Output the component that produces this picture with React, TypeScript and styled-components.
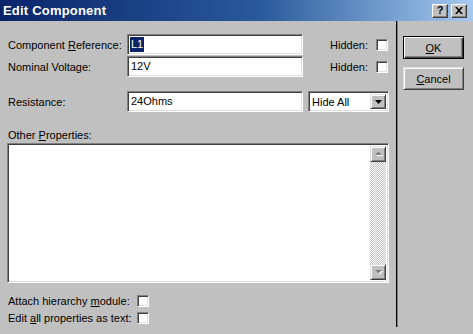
import styled, { createGlobalStyle, css } from "styled-components";

const GlobalStyle = createGlobalStyle`
  html, body {
    margin: 0;
    padding: 0;
    background: #c0c0c0;
    overflow: hidden;
  }
  body {
    font-family: "Liberation Sans", Arial, sans-serif;
    font-size: 11px;
    color: #000;
  }
`;

export default function App() {
  return (
    <Window>
      <GlobalStyle />
      <TitleBar>
        <Title>Edit Component</Title>
        <CaptionButtons>
          <CaptionButton>?</CaptionButton>
          <CaptionButton>
            <svg width="8" height="7" viewBox="0 0 8 7">
              <path d="M0 0h2l2 2.3L6 0h2L5 3.5 8 7H6L4 4.7 2 7H0l3-3.5z" fill="#000" />
            </svg>
          </CaptionButton>
        </CaptionButtons>
      </TitleBar>
      <Body>
        <Main>
          <FieldRow>
            <Label>
              Component <u>R</u>eference:
            </Label>
            <Input>
              <Value $selected>L1</Value>
            </Input>
            <HiddenGroup>
              Hidden:
              <CheckBox />
            </HiddenGroup>
          </FieldRow>
          <FieldRow $space={1}>
            <Label>Nominal Voltage:</Label>
            <Input>
              <Value>12V</Value>
            </Input>
            <HiddenGroup>
              Hidden:
              <CheckBox />
            </HiddenGroup>
          </FieldRow>
          <FieldRow $space={14}>
            <Label>Resistance:</Label>
            <Input>
              <Value>24Ohms</Value>
            </Input>
            <Combo>
              <ComboText>Hide All</ComboText>
              <ArrowButton>
                <svg width="7" height="4" viewBox="0 0 7 4">
                  <path d="M0 0h7L3.5 4z" fill="#000" />
                </svg>
              </ArrowButton>
            </Combo>
          </FieldRow>
          <SectionLabel>
            Other <u>P</u>roperties:
          </SectionLabel>
          <TextArea>
            <TextSpace />
            <ScrollBar>
              <ScrollButton>
                <svg width="9" height="6" viewBox="0 0 9 6">
                  <path d="M2 5h7L5.5 1.5z" fill="#fff" />
                  <path d="M1 4h7L4.5 0.5z" fill="#808080" />
                </svg>
              </ScrollButton>
              <Track />
              <ScrollButton>
                <svg width="9" height="6" viewBox="0 0 9 6">
                  <path d="M2 2h7L5.5 5.5z" fill="#fff" />
                  <path d="M1 1h7L4.5 4.5z" fill="#808080" />
                </svg>
              </ScrollButton>
            </ScrollBar>
          </TextArea>
          <CheckRow $space={9}>
            <Label>
              Attach hierarchy <u>m</u>odule:
            </Label>
            <CheckBox />
          </CheckRow>
          <CheckRow>
            <Label>
              Edit <u>a</u>ll properties as text:
            </Label>
            <CheckBox />
          </CheckRow>
        </Main>
        <Divider />
        <Side>
          <Button $default>
            <u>O</u>K
          </Button>
          <Button>
            <u>C</u>ancel
          </Button>
        </Side>
      </Body>
    </Window>
  );
}

const Window = styled.div`
  width: 473px;
  height: 334px;
  display: flex;
  flex-direction: column;
  background: #c0c0c0;
`;

const TitleBar = styled.div`
  height: 21px;
  flex: none;
  display: flex;
  align-items: center;
  justify-content: space-between;
  padding: 0 6px 0 3px;
  background: linear-gradient(to right, #0a246a 0%, #2a5a9c 55%, #a6caf0 100%);
`;

const Title = styled.div`
  color: #fff;
  font-weight: bold;
  font-size: 13px;
  letter-spacing: 0.2px;
`;

const CaptionButtons = styled.div`
  display: flex;
  gap: 3px;
`;

const CaptionButton = styled.div`
  width: 16px;
  height: 14px;
  box-sizing: border-box;
  display: flex;
  align-items: center;
  justify-content: center;
  background: #c0c0c0;
  border: 1px solid;
  border-color: #fff #404040 #404040 #fff;
  box-shadow: inset -1px -1px #808080;
  font-weight: bold;
  font-size: 11px;
  line-height: 1;
`;

const Body = styled.div`
  flex: 1;
  display: flex;
  padding: 0 0 7px 7px;
`;

const Main = styled.div`
  width: 382px;
  display: flex;
  flex-direction: column;
  padding-top: 13px;
`;

const FieldRow = styled.div<{ $space?: number }>`
  display: grid;
  grid-template-columns: 120px 176px 1fr;
  align-items: center;
  height: 21px;
  margin-top: ${(p) => p.$space ?? 0}px;
`;

const Label = styled.div`
  white-space: nowrap;
  padding-left: 1px;
`;

const sunken = css`
  box-sizing: border-box;
  border: 1px solid;
  border-color: #808080 #fff #fff #808080;
  box-shadow: inset 1px 1px #404040, inset -1px -1px #dfdfdf;
`;

const Input = styled.div`
  ${sunken};
  height: 21px;
  background: #fff;
  display: flex;
  align-items: center;
  padding: 0 2px;
`;

const Value = styled.span<{ $selected?: boolean }>`
  line-height: 15px;
  padding: 0 1px;
  font-size: 11px;
  ${(p) =>
    p.$selected &&
    css`
      background: #0a246a;
      color: #fff;
    `}
`;

const HiddenGroup = styled.div`
  display: flex;
  justify-content: flex-end;
  align-items: center;
  gap: 8px;
  padding-right: 1px;
`;

const CheckBox = styled.div`
  ${sunken};
  width: 12px;
  height: 12px;
  background: #fff;
`;

const Combo = styled.div`
  ${sunken};
  margin-left: 5px;
  height: 21px;
  background: #fff;
  display: flex;
  align-items: stretch;
  padding: 2px;
`;

const ComboText = styled.div`
  flex: 1;
  display: flex;
  align-items: center;
  padding-left: 1px;
`;

const raised = css`
  box-sizing: border-box;
  background: #c0c0c0;
  border: 1px solid;
  border-color: #dfdfdf #404040 #404040 #dfdfdf;
  box-shadow: inset 1px 1px #fff, inset -1px -1px #808080;
`;

const ArrowButton = styled.div`
  ${raised};
  width: 16px;
  display: flex;
  align-items: center;
  justify-content: center;
`;

const SectionLabel = styled.div`
  margin-top: 16px;
  line-height: 14px;
  padding-left: 1px;
`;

const TextArea = styled.div`
  ${sunken};
  margin-top: 1px;
  height: 140px;
  background: #fff;
  display: flex;
  padding: 2px;
`;

const TextSpace = styled.div`
  flex: 1;
`;

const ScrollBar = styled.div`
  width: 16px;
  display: flex;
  flex-direction: column;
`;

const ScrollButton = styled.div`
  ${raised};
  height: 16px;
  flex: none;
  display: flex;
  align-items: center;
  justify-content: center;
`;

const Track = styled.div`
  flex: 1;
  background-image: repeating-conic-gradient(#c0c0c0 0 25%, #fff 0 50%);
  background-size: 2px 2px;
`;

const CheckRow = styled.div<{ $space?: number }>`
  display: grid;
  grid-template-columns: 130px 12px;
  align-items: center;
  height: 17px;
  margin-top: ${(p) => p.$space ?? 0}px;
`;

const Divider = styled.div`
  width: 1px;
  margin-left: 7px;
  background: #000;
  border-right: 1px solid #808080;
`;

const Side = styled.div`
  display: flex;
  flex-direction: column;
  gap: 8px;
  padding: 15px 0 0 5px;
`;

const Button = styled.div<{ $default?: boolean }>`
  ${raised};
  width: 61px;
  height: 23px;
  display: flex;
  align-items: center;
  justify-content: center;
  font-size: 11px;
  ${(p) =>
    p.$default &&
    css`
      border: 1px solid #000;
      box-shadow: inset 1px 1px #fff, inset -1px -1px #404040, inset -2px -2px #808080;
    `}
`;
